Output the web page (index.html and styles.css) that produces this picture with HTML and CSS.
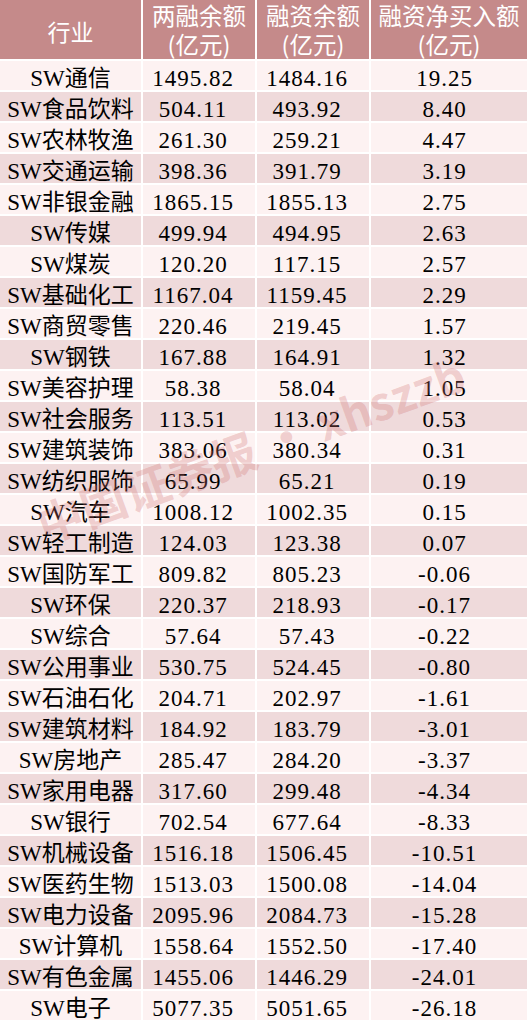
FILE: index.html
```html
<!DOCTYPE html>
<html lang="zh-CN">
<head>
<meta charset="utf-8">
<title>融资融券行业数据</title>
<link rel="stylesheet" href="styles.css">
</head>
<body>
<div class="page">
  <div class="table">
    <div class="hc">行业</div>
    <div class="hc two">两融余额<br>(亿元)</div>
    <div class="hc two">融资余额<br>(亿元)</div>
    <div class="hc two">融资净买入额<br>(亿元)</div>

    <div class="c n">SW通信</div><div class="c v">1495.82</div><div class="c v">1484.16</div><div class="c v w">19.25</div>
    <div class="c n o">SW食品饮料</div><div class="c v o">504.11</div><div class="c v o">493.92</div><div class="c v w o">8.40</div>
    <div class="c n">SW农林牧渔</div><div class="c v">261.30</div><div class="c v">259.21</div><div class="c v w">4.47</div>
    <div class="c n o">SW交通运输</div><div class="c v o">398.36</div><div class="c v o">391.79</div><div class="c v w o">3.19</div>
    <div class="c n">SW非银金融</div><div class="c v">1865.15</div><div class="c v">1855.13</div><div class="c v w">2.75</div>
    <div class="c n o">SW传媒</div><div class="c v o">499.94</div><div class="c v o">494.95</div><div class="c v w o">2.63</div>
    <div class="c n">SW煤炭</div><div class="c v">120.20</div><div class="c v">117.15</div><div class="c v w">2.57</div>
    <div class="c n o">SW基础化工</div><div class="c v o">1167.04</div><div class="c v o">1159.45</div><div class="c v w o">2.29</div>
    <div class="c n">SW商贸零售</div><div class="c v">220.46</div><div class="c v">219.45</div><div class="c v w">1.57</div>
    <div class="c n o">SW钢铁</div><div class="c v o">167.88</div><div class="c v o">164.91</div><div class="c v w o">1.32</div>
    <div class="c n">SW美容护理</div><div class="c v">58.38</div><div class="c v">58.04</div><div class="c v w">1.05</div>
    <div class="c n o">SW社会服务</div><div class="c v o">113.51</div><div class="c v o">113.02</div><div class="c v w o">0.53</div>
    <div class="c n">SW建筑装饰</div><div class="c v">383.06</div><div class="c v">380.34</div><div class="c v w">0.31</div>
    <div class="c n o">SW纺织服饰</div><div class="c v o">65.99</div><div class="c v o">65.21</div><div class="c v w o">0.19</div>
    <div class="c n">SW汽车</div><div class="c v">1008.12</div><div class="c v">1002.35</div><div class="c v w">0.15</div>
    <div class="c n o">SW轻工制造</div><div class="c v o">124.03</div><div class="c v o">123.38</div><div class="c v w o">0.07</div>
    <div class="c n">SW国防军工</div><div class="c v">809.82</div><div class="c v">805.23</div><div class="c v w">-0.06</div>
    <div class="c n o">SW环保</div><div class="c v o">220.37</div><div class="c v o">218.93</div><div class="c v w o">-0.17</div>
    <div class="c n">SW综合</div><div class="c v">57.64</div><div class="c v">57.43</div><div class="c v w">-0.22</div>
    <div class="c n o">SW公用事业</div><div class="c v o">530.75</div><div class="c v o">524.45</div><div class="c v w o">-0.80</div>
    <div class="c n">SW石油石化</div><div class="c v">204.71</div><div class="c v">202.97</div><div class="c v w">-1.61</div>
    <div class="c n o">SW建筑材料</div><div class="c v o">184.92</div><div class="c v o">183.79</div><div class="c v w o">-3.01</div>
    <div class="c n">SW房地产</div><div class="c v">285.47</div><div class="c v">284.20</div><div class="c v w">-3.37</div>
    <div class="c n o">SW家用电器</div><div class="c v o">317.60</div><div class="c v o">299.48</div><div class="c v w o">-4.34</div>
    <div class="c n">SW银行</div><div class="c v">702.54</div><div class="c v">677.64</div><div class="c v w">-8.33</div>
    <div class="c n o">SW机械设备</div><div class="c v o">1516.18</div><div class="c v o">1506.45</div><div class="c v w o">-10.51</div>
    <div class="c n">SW医药生物</div><div class="c v">1513.03</div><div class="c v">1500.08</div><div class="c v w">-14.04</div>
    <div class="c n o">SW电力设备</div><div class="c v o">2095.96</div><div class="c v o">2084.73</div><div class="c v w o">-15.28</div>
    <div class="c n">SW计算机</div><div class="c v">1558.64</div><div class="c v">1552.50</div><div class="c v w">-17.40</div>
    <div class="c n o">SW有色金属</div><div class="c v o">1455.06</div><div class="c v o">1446.29</div><div class="c v w o">-24.01</div>
    <div class="c n">SW电子</div><div class="c v">5077.35</div><div class="c v">5051.65</div><div class="c v w">-26.18</div>
  </div>
  <div class="mark">中国证券报 · xhszzb</div>
</div>
</body>
</html>
```

FILE: styles.css
```css
html, body {
  margin: 0;
  padding: 0;
  background: #ffffff;
}

.page {
  position: relative;
  width: 529px;
  height: 1022px;
  overflow: hidden;
}

.table {
  display: grid;
  grid-template-columns: 141px 112px 112px 156px;
  grid-template-rows: 59px;
  grid-auto-rows: 29px;
  column-gap: 2px;
  row-gap: 2px;
  width: 527px;
  font-family: "Liberation Serif", "Noto Sans CJK SC", serif;
  color: #000000;
}

.hc {
  background: #c58a8a;
  color: #ffffff;
  font-family: "Noto Sans CJK SC", sans-serif;
  font-size: 23px;
  line-height: 29px;
  display: flex;
  align-items: center;
  justify-content: center;
  text-align: center;
  padding-top: 4px;
  box-sizing: border-box;
  white-space: nowrap;
}

.hc.two {
  padding-top: 1px;
  font-size: 23.5px;
}

.c {
  background: #fdf2f2;
  font-size: 23px;
  line-height: 29px;
  text-align: center;
  white-space: nowrap;
  padding-top: 3px;
  box-sizing: border-box;
}

.c.o {
  background: #efdadb;
}

.c.v {
  padding-right: 12px;
  letter-spacing: 1px;
}

.c.w {
  padding-right: 9px;
}

.mark {
  position: absolute;
  left: 38px;
  top: 500px;
  font-family: "Noto Sans CJK SC", sans-serif;
  font-weight: 700;
  font-size: 46px;
  line-height: 50px;
  white-space: nowrap;
  color: rgba(210, 115, 115, 0.3);
  transform: rotate(-20deg);
  transform-origin: left center;
  pointer-events: none;
}
```
